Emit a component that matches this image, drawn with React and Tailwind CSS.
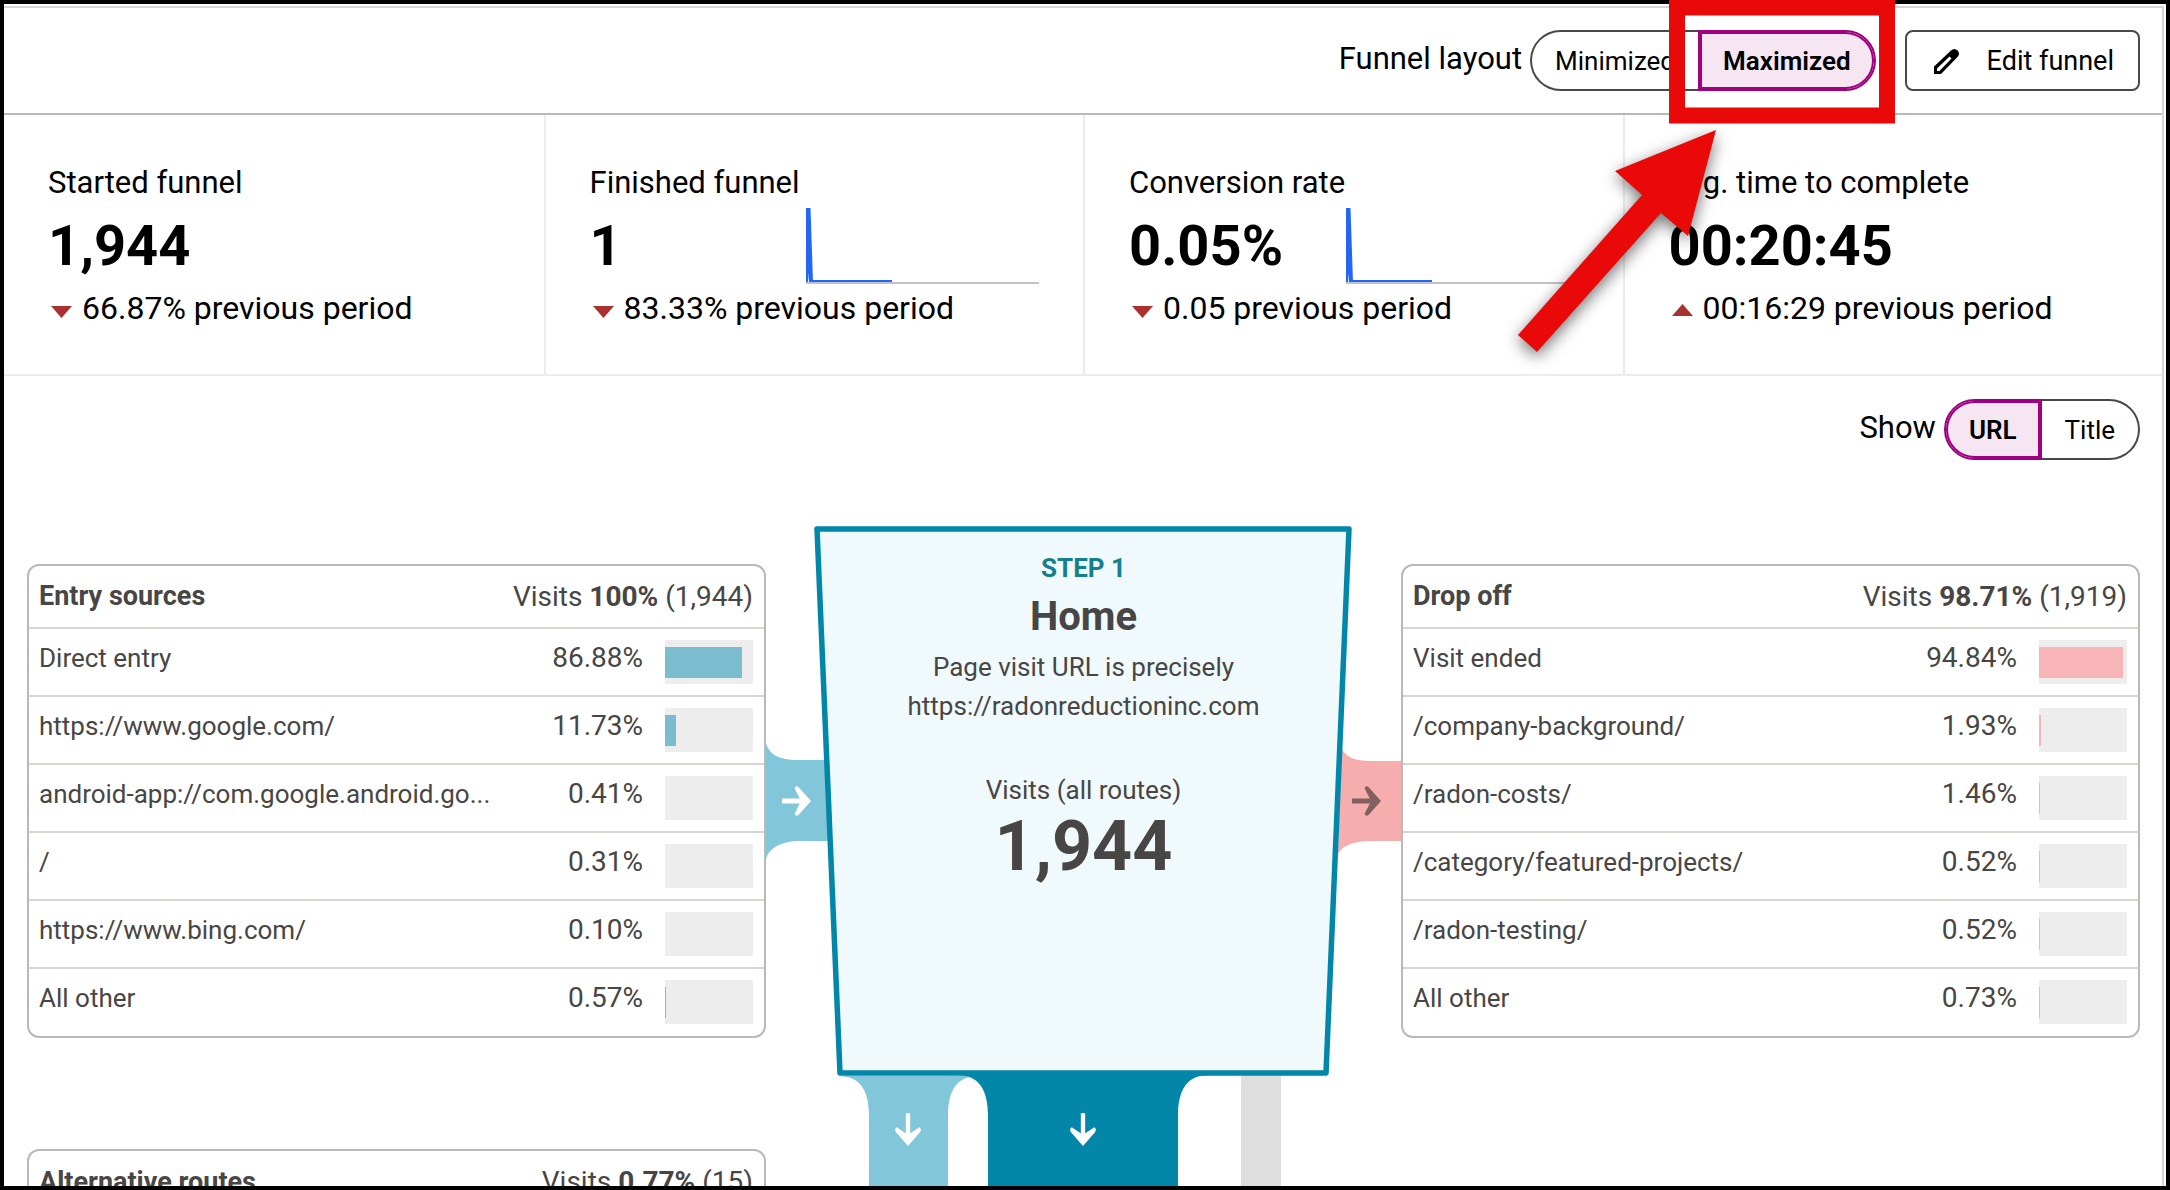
import React, { useState } from 'react';
import clsx from 'clsx';

const metrics = [
  { label: 'Started funnel', value: '1,944', change: '66.87%', direction: 'down', chart: false },
  { label: 'Finished funnel', value: '1', change: '83.33%', direction: 'down', chart: true },
  { label: 'Conversion rate', value: '0.05%', change: '0.05', direction: 'down', chart: true },
  { label: 'Avg. time to complete', value: '00:20:45', change: '00:16:29', direction: 'up', chart: false }
];

const entrySources = [
  { name: 'Direct entry', percent: '86.88%', bar: 77 },
  { name: 'https://www.google.com/', percent: '11.73%', bar: 11 },
  { name: 'android-app://com.google.android.go...', percent: '0.41%', bar: 0 },
  { name: '/', percent: '0.31%', bar: 0 },
  { name: 'https://www.bing.com/', percent: '0.10%', bar: 0 },
  { name: 'All other', percent: '0.57%', bar: 1 }
];

const dropOffs = [
  { name: 'Visit ended', percent: '94.84%', bar: 84 },
  { name: '/company-background/', percent: '1.93%', bar: 2 },
  { name: '/radon-costs/', percent: '1.46%', bar: 1 },
  { name: '/category/featured-projects/', percent: '0.52%', bar: 1 },
  { name: '/radon-testing/', percent: '0.52%', bar: 1 },
  { name: 'All other', percent: '0.73%', bar: 1 }
];

const SegmentedControl = ({ label, options, value, onChange }) => (
  <div className="flex items-center gap-2" role="group" aria-label={label}>
    <span className="pb-1 text-[31px] leading-10">{label}</span>
    <div className="flex h-[61px]">
      {options.map((option, i) => {
        const selected = option === value;
        return (
          <button
            key={option}
            type="button"
            aria-pressed={selected}
            onClick={() => onChange(option)}
            className={clsx(
              'border-2 px-[23px] text-[26px] leading-8',
              i === 0 ? 'rounded-l-full' : 'rounded-r-full',
              selected
                ? 'border-[#9f0080] bg-[#f5e6f1] font-semibold shadow-[inset_0_0_0_2px_#9f0080]'
                : 'border-[#484848] bg-white',
              !selected && (i === 0 ? 'border-r-0' : 'border-l-0')
            )}
          >
            {option}
          </button>
        );
      })}
    </div>
  </div>
);

const PenIcon = () => (
  <svg className="h-8 w-8" viewBox="-3 -4 32 32" aria-hidden="true">
    <path d="M0 25V17.500L17 1.500Q20.500-1.500 23.500 1.500Q26.500 4.500 23.500 8L7 25z" />
    <path d="M3 22V19.500L15.500 7.500L17.500 9.500L5.500 22z" fill="white" />
  </svg>
);

const Sparkline = () => (
  <svg className="h-[76px] w-[233px] shrink-0 self-end" viewBox="0 0 233 76" aria-hidden="true">
    <path d="M0 75H233" stroke="#c1c1c9" strokeWidth="2" />
    <path d="M1 74V1M6 73H86" fill="none" stroke="#2465f3" strokeWidth="2" />
    <path d="M0 72V0H4.500L7 74H3L1.500 60V72z" fill="#2465f3" />
  </svg>
);

const Triangle = ({ direction }) => (
  <svg className="h-3 w-[21px] shrink-0" viewBox="0 0 21 12" aria-hidden="true">
    <path d={direction === 'up' ? 'M0 12L10.500 0L21 12z' : 'M0 0H21L10.500 12z'} fill="#ab3030" />
  </svg>
);

const MetricCard = ({ metric, first }) => (
  <div className={clsx('px-11 pt-12 pb-[46px]', !first && 'border-l-2 border-[#ececec]')}>
    <p className="text-[31px] leading-10">{metric.label}</p>
    <div className="flex h-[81px] items-center justify-between">
      <p className="pt-1 text-[56px] leading-[60px] font-bold">{metric.value}</p>
      {metric.chart && <Sparkline />}
    </div>
    <p className="mt-1 flex items-center gap-[10px] pl-[3px] text-[32px] leading-10">
      <span className={metric.direction === 'up' ? 'pt-1' : 'pt-2'}>
        <Triangle direction={metric.direction} />
      </span>
      {metric.change} previous period
    </p>
  </div>
);

const SourceTable = ({ title, percent, count, rows, barClass }) => (
  <div className="overflow-hidden rounded-xl border-2 border-[#b9b9b9]">
    <table className="w-full table-fixed border-collapse text-[28px]">
      <colgroup>
        <col />
        <col className="w-[200px]" />
        <col className="w-[120px]" />
        <col className="w-[121px]" />
      </colgroup>
      <thead>
        <tr className="h-[62px]">
          <th className="pl-[10px] text-left text-[27px] font-bold whitespace-nowrap">{title}</th>
          <th colSpan={3} className="pr-[11px] text-right font-normal whitespace-nowrap">
            Visits <b>{percent}</b> ({count})
          </th>
        </tr>
      </thead>
      <tbody>
        {rows.map(row => (
          <tr key={row.name} className="h-[68px] border-t-2 border-[#d9d6d2] align-top">
            <td colSpan={2} className="pt-[9px] pl-[10px] text-[26px] leading-10 whitespace-nowrap">{row.name}</td>
            <td className="pt-[9px] text-right leading-10">{row.percent}</td>
            <td className="pt-[11px] pr-[11px] pl-[22px]">
              <div className="flex h-11 items-center bg-[#ededed]">
                <div className={clsx('h-[31px]', barClass)} style={{ width: row.bar }} />
              </div>
            </td>
          </tr>
        ))}
      </tbody>
    </table>
  </div>
);

const FlowArrow = ({ transform, color = 'white' }) => (
  <g transform={transform} fill={color}>
    <path d="M-29-2.500H-8V2.500H-29z" />
    <path d="M0 0L-12.500-14Q-15-16-16.500-13L-10 0L-16.500 13Q-15 16-12.500 14z" />
  </g>
);

/* Funnel shape with its in/out connectors, drawn behind the step text */
const FunnelShape = () => (
  <svg className="absolute top-0 left-0 h-[700px] w-full" viewBox="766 526 635 700" preserveAspectRatio="xMidYMin meet" aria-hidden="true">
    <path d="M766 743C769 755 780 760 797 760H840V841H797C780 842 769 848 766 859z" fill="#82c6d9" />
    <path d="M1341 747C1345 756 1353 761 1370 761H1401V841H1370C1353 841 1342 846 1338 854z" fill="#f6adad" />
    <path d="M1241 1073H1281V1226H1241z" fill="#dedede" />
    <path d="M838 1076C860 1076 869 1090 869 1116V1226H948V1116C948 1090 957 1076 979 1076z" fill="#82c6d9" />
    <path d="M957 1075C979 1075 988 1090 988 1116V1226H1178V1116C1178 1090 1187 1075 1209 1075z" fill="#0287a9" />
    <path d="M817 529H1349L1326 1073H840z" fill="#f0f9fc" stroke="#0287a9" strokeWidth="5.500" strokeLinejoin="round" />
    <FlowArrow transform="translate(811 801)" />
    <FlowArrow transform="translate(1381 801)" color="#83605f" />
    <FlowArrow transform="translate(908 1146) rotate(90) scale(1.130 0.870)" />
    <FlowArrow transform="translate(1083 1146) rotate(90) scale(1.130 0.870)" />
  </svg>
);

const FunnelStep = () => (
  <section className="relative text-center">
    <FunnelShape />
    <div className="relative pt-[23px] text-[26px] leading-[39px]">
      <p className="font-bold text-[#14808c]">STEP 1</p>
      <h2 className="pt-1 pb-[6px] text-[40px] leading-[50px] font-bold">Home</h2>
      <p>Page visit URL is precisely</p>
      <p>https://radonreductioninc.com</p>
      <p className="pt-[45px]">Visits (all routes)</p>
      <p className="text-[70px] leading-[72px] font-bold">1,944</p>
    </div>
  </section>
);

/* Callout frame and arrow pointing at the layout switch */
const Callout = () => (
  <svg className="pointer-events-none absolute top-0 right-[270px] h-[380px] w-[400px]" viewBox="0 0 400 380" aria-hidden="true">
    <path d="M177 7.500H387V115.500H177z" fill="none" stroke="#ea0909" strokeWidth="16" />
    <path
      className="drop-shadow-[0_5px_8px_rgba(0,0,0,0.55)]"
      d="M216 130L188 236L161 213L37 352L18 335L142 195L115 171z"
      fill="#ea0909"
    />
  </svg>
);

export default function App() {
  const [layout, setLayout] = useState('Maximized');
  const [show, setShow] = useState('URL');

  return (
    <div className="relative h-screen overflow-hidden font-[Roboto,sans-serif] text-black">
      <div className="h-full overflow-hidden border-4 border-black bg-white pt-[2px] pr-[2px]">
        <div className="h-full overflow-hidden border-t-2 border-r-2 border-[#d9d6d2]">
          <header className="flex h-[107px] items-center justify-end border-b-2 border-[#b9b9b9] pr-[22px]">
            <SegmentedControl
              label="Funnel layout"
              options={['Minimized', 'Maximized']}
              value={layout}
              onChange={setLayout}
            />
            <button
              type="button"
              className="ml-[29px] flex h-[61px] items-center gap-6 rounded-lg border-2 border-[#484848] px-6 text-[27px] leading-8"
            >
              <PenIcon />
              Edit funnel
            </button>
          </header>

          <section className="grid grid-cols-4 border-b-2 border-[#ececec]">
            {metrics.map((metric, i) => (
              <MetricCard key={metric.label} metric={metric} first={i === 0} />
            ))}
          </section>

          <div className="flex justify-end pt-[23px] pr-[22px]">
            <SegmentedControl label="Show" options={['URL', 'Title']} value={show} onChange={setShow} />
          </div>

          <main className="grid grid-cols-[1fr_635px_1fr] pt-[66px] pr-[22px] pl-[23px] text-[#484644]">
            <div className="flex flex-col gap-[111px] pt-[38px]">
              <SourceTable title="Entry sources" percent="100%" count="1,944" rows={entrySources} barClass="bg-[#7bbccf]" />
              <SourceTable title="Alternative routes" percent="0.77%" count="15" rows={[]} />
            </div>
            <FunnelStep />
            <div className="pt-[38px]">
              <SourceTable title="Drop off" percent="98.71%" count="1,919" rows={dropOffs} barClass="bg-[#f8b5b8]" />
            </div>
          </main>
        </div>
      </div>
      <Callout />
    </div>
  );
}
